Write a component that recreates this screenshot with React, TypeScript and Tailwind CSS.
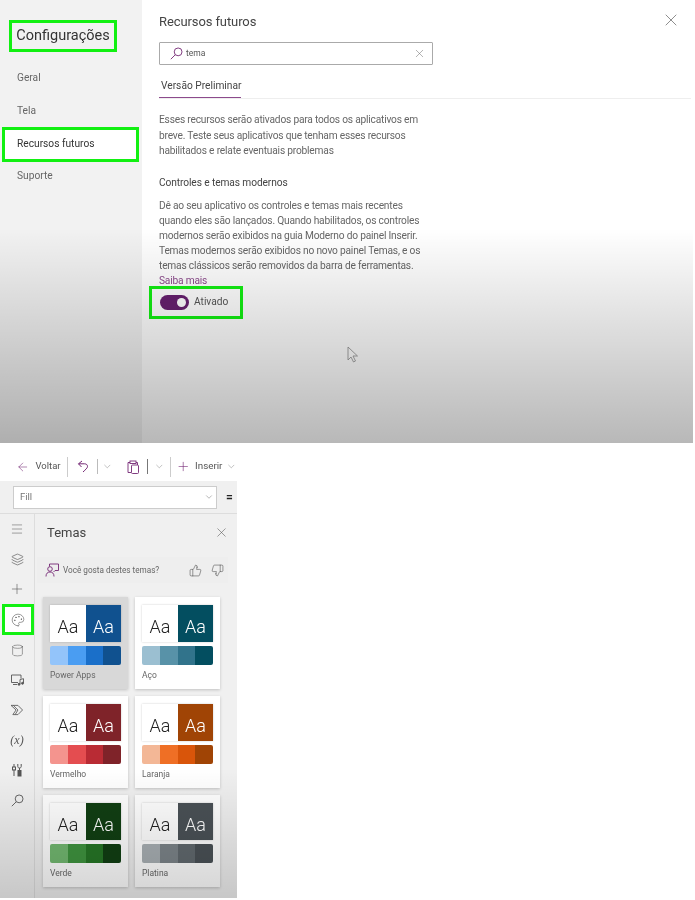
import { ArrowLeft, ChevronDown, Plus, ThumbsDown, ThumbsUp, X, Menu, Layers, Palette, Cylinder } from 'lucide-react'

const font = "font-['Roboto',sans-serif]"

const themes = [
  { name: 'Power Apps', dark: '#10518f', colors: ['#93c4fa', '#4a9df2', '#1a6fc9', '#10518f'], selected: true },
  { name: 'Aço', dark: '#034e60', colors: ['#9bbfd1', '#5892a8', '#31738b', '#034e60'] },
  { name: 'Vermelho', dark: '#7f2329', colors: ['#f4948e', '#e44d50', '#b92b34', '#7f2329'] },
  { name: 'Laranja', dark: '#a04405', colors: ['#f3b796', '#ef6f25', '#d9550a', '#a04405'] },
  { name: 'Verde', dark: '#113f13', colors: ['#72b870', '#3f943f', '#267626', '#113f13'] },
  { name: 'Platina', dark: '#4a5156', colors: ['#a8afb3', '#7c8489', '#61696e', '#4a5156'] },
]

function SearchIcon({ size, color }: { size: number; color: string }) {
  return (
    <svg width={size} height={size} viewBox="0 0 16 16" fill="none" stroke={color} strokeWidth="1.1">
      <circle cx="10" cy="6" r="4.8" />
      <path d="M6.500 9.500 1 15" />
    </svg>
  )
}

function MediaIcon() {
  return (
    <svg width="15" height="14" viewBox="0 0 15 14" fill="none" stroke="#555" strokeWidth="0.9">
      <path d="M8 9.500H1.500V2h9.500v3.500" />
      <path d="M3 11.500h4" />
      <path d="M10 11V6.500l3.500-.8V10" />
      <circle cx="9" cy="11.300" r="1" fill="#555" />
      <circle cx="12.500" cy="10.300" r="1" fill="#555" />
    </svg>
  )
}

function AutomateIcon() {
  return (
    <svg width="14" height="12" viewBox="0 0 15 13" fill="none" stroke="#555" strokeWidth="0.9">
      <path d="M1 1.500h7.500l5 5-5 5H3l3.500-5z" />
      <path d="M3.500 1.500l5 5-3 5" />
    </svg>
  )
}

function ToolsIcon() {
  return (
    <svg width="12" height="14" viewBox="0 0 12 14" fill="none" stroke="#555" strokeWidth="1">
      <path d="M3 1v3M3 6.500V13" />
      <rect x="1.500" y="4" width="3" height="3" />
      <path d="M8.500 5v8" />
      <path d="M6.800 1v2.500c0 1 .8 1.500 1.700 1.500s1.700-.5 1.700-1.500V1" />
      <rect x="7" y="7.500" width="3" height="5.500" fill="#555" />
    </svg>
  )
}

function FeedbackIcon() {
  return (
    <svg width="14" height="14" viewBox="0 0 14 14" fill="none" stroke="#742774" strokeWidth="0.9">
      <path d="M4.500 3.500V1h9v6.500h-3.500l-1.500 1.500" />
      <circle cx="5" cy="6" r="2.300" />
      <path d="M1 13.500c0-3 1.500-4.500 4-4.500s4 1.500 4 4.500" />
    </svg>
  )
}

function UndoIcon() {
  return (
    <svg width="12" height="13" viewBox="0 0 12 13" fill="none" stroke="#742774" strokeWidth="1">
      <path d="M5 1 1.500 3.800h6c2 0 3 1.200 3 2.600 0 1.700-1.800 3-4.500 5.600" />
      <path d="M1.500 3.800 4.500 7" />
    </svg>
  )
}

function PasteIcon() {
  return (
    <svg width="12" height="14" viewBox="0 0 12 14" fill="none" stroke="#742774" strokeWidth="0.9">
      <path d="M3 2.500H1v10h3" />
      <path d="M9 2.500h1.500V5" />
      <rect x="3" y="1" width="6" height="2.500" />
      <rect x="4.500" y="5" width="7" height="8.500" rx="1" />
    </svg>
  )
}

function ThemeCard({ t }: { t: (typeof themes)[number] }) {
  return (
    <div className={`h-[92px] w-[85px] px-[7px] pt-[8px] shadow-[0_1px_3px_rgba(0,0,0,0.2)] ${t.selected ? 'bg-[#d8d8d8]' : 'bg-white'}`}>
      <div className="flex h-[37px] w-[71px] shadow-[0_0_2px_rgba(0,0,0,0.2)]">
        <div className="flex w-[36px] items-end justify-center bg-white pb-[3px] text-[18px] font-light leading-[24px] text-[#222]">Aa</div>
        <div className="flex w-[35px] items-end justify-center pb-[3px] text-[18px] font-light leading-[24px] text-white" style={{ backgroundColor: t.dark }}>Aa</div>
      </div>
      <div className="mt-[4px] flex h-[19px] w-[71px] overflow-hidden rounded-[2px]">
        {t.colors.map((c) => (
          <div key={c} className="flex-1" style={{ backgroundColor: c }} />
        ))}
      </div>
      <div className="mt-[4px] text-[8.500px] leading-[12px] text-[#666]">{t.name}</div>
    </div>
  )
}

export default function App() {
  return (
    <div className={`${font} h-[900px] w-[695px] overflow-hidden bg-white blur-[0.35px]`}>
      {/* Settings dialog */}
      <div className="relative flex h-[443px] w-[693px] bg-white">
        <div className="w-[142px] shrink-0 bg-[#f2f2f2] pt-[20px]">
          <div className="ml-[9px] flex h-[32px] w-[108px] items-center justify-center border-[3px] border-[#12f012] text-[14.500px] text-[#333]">Configurações</div>
          <div className="ml-[17px] mt-[18px] text-[10.200px] leading-[16px] text-[#666]">Geral</div>
          <div className="ml-[17px] mt-[17px] text-[10.200px] leading-[16px] text-[#666]">Tela</div>
          <div className="ml-[2px] mt-[8px] flex h-[35px] w-[137px] items-center border-[3px] border-[#12f012] bg-white pb-[2px] pl-[12px] text-[10.200px] text-[#333]">Recursos futuros</div>
          <div className="ml-[17px] mt-[6px] text-[10.200px] leading-[16px] text-[#666]">Suporte</div>
        </div>
        <div className="flex-1 pl-[17px]">
          <div className="flex h-[42px] items-center justify-between pr-[12px]">
            <div className="pt-[1px] text-[13px] tracking-[-0.1px] text-[#444]">Recursos futuros</div>
            <X size={20} strokeWidth={0.8} className="-mt-[2px] text-[#555]" />
          </div>
          <div className="flex h-[23px] w-[274px] items-center rounded-[1px] border border-[#aaa] pl-[10px] pr-[6px]">
            <SearchIcon size={13} color="#742774" />
            <span className="ml-[3px] flex-1 text-[8.500px] text-[#555]">tema</span>
            <X size={13} strokeWidth={0.9} className="text-[#666]" />
          </div>
          <div className="mt-[12px] w-[532px] border-b border-[#eee]">
            <div className="w-[82px] border-b border-[#8c4a8c] pb-[2px] pl-[2px] text-[10.200px] leading-[18px] whitespace-nowrap text-[#444]">Versão Preliminar</div>
          </div>
          <p className="mt-[13px] w-[290px] text-[10.200px] leading-[15.500px] tracking-[-0.2px] text-[#666]">
            Esses recursos serão ativados para todos os aplicativos em<br />
            breve. Teste seus aplicativos que tenham esses recursos<br />
            habilitados e relate eventuais problemas
          </p>
          <div className="mt-[16px] text-[10.200px] leading-[16px] tracking-[-0.1px] text-[#444]">Controles e temas modernos</div>
          <p className="mt-[7px] w-[290px] text-[10.200px] leading-[15px] tracking-[-0.2px] whitespace-nowrap text-[#666]">
            Dê ao seu aplicativo os controles e temas mais recentes<br />
            quando eles são lançados. Quando habilitados, os controles<br />
            modernos serão exibidos na guia Moderno do painel Inserir.<br />
            Temas modernos serão exibidos no novo painel Temas, e os<br />
            temas clássicos serão removidos da barra de ferramentas.<br />
            <span className="text-[#8c4a8c]">Saiba mais</span>
          </p>
          <div className="-ml-[10px] -mt-[2px] flex h-[33px] w-[94px] items-center border-[3px] border-[#12f012] pl-[8px]">
            <div className="flex h-[15px] w-[29px] items-center justify-end rounded-full bg-[#67206f] pr-[3px]">
              <div className="h-[9px] w-[9px] rounded-full bg-white" />
            </div>
            <span className="ml-[5px] text-[10.200px] text-[#555]">Ativado</span>
          </div>
        </div>
        <div className="pointer-events-none absolute inset-x-0 bottom-0 h-[215px] bg-gradient-to-b from-transparent to-[rgba(0,0,0,0.28)]" />
        <svg className="absolute left-[347px] top-[346px]" width="12" height="18" viewBox="0 0 12 18" fill="none" stroke="#777" strokeWidth="0.8">
          <path d="M1 1v13l3-3 2.500 5 2-1-2.500-5h4.500z" />
        </svg>
      </div>

      {/* Studio panel */}
      <div className="relative mt-[9px] h-[446px] w-[237px] bg-[#f0f0f0]">
        <div className="flex h-[29px] items-center bg-white pl-[16px] text-[#742774]">
          <ArrowLeft size={14} strokeWidth={1} />
          <span className="ml-[6px] text-[9.500px] text-[#555]">Voltar</span>
          <div className="ml-[6px] h-[20px] w-px bg-[#ccc]" />
          <div className="ml-[9px]"><UndoIcon /></div>
          <div className="ml-[8px] h-[15px] w-px bg-[#bbb]" />
          <ChevronDown size={11} strokeWidth={1} className="ml-[5px] text-[#777]" />
          <div className="ml-[14px]"><PasteIcon /></div>
          <div className="ml-[8px] h-[15px] w-px bg-[#777]" />
          <ChevronDown size={11} strokeWidth={1} className="ml-[6px] text-[#777]" />
          <div className="ml-[5px] h-[20px] w-px bg-[#ccc]" />
          <Plus size={15} strokeWidth={1} className="ml-[5px]" />
          <span className="ml-[5px] text-[9.800px] text-[#555]">Inserir</span>
          <ChevronDown size={11} strokeWidth={1} className="ml-[4px] text-[#777]" />
        </div>
        <div className="flex h-[33px] items-center border-b border-[#ddd] pl-[13px]">
          <div className="flex h-[23px] w-[204px] items-center justify-between border border-[#ccc] bg-white pl-[6px] pr-[2px] text-[9.500px] text-[#777]">
            Fill
            <ChevronDown size={10} strokeWidth={1} className="text-[#555]" />
          </div>
          <span className="ml-[9px] text-[12px] font-bold text-[#222]">=</span>
        </div>
        <div className="flex h-[384px]">
          <div className="flex w-[35px] flex-col items-center border-r border-[#ddd] text-[#555]">
            <div className="flex h-[30px] items-center"><Menu size={14} strokeWidth={0.9} /></div>
            <div className="flex h-[30px] items-center"><Layers size={13} strokeWidth={1.2} /></div>
            <div className="flex h-[30px] items-center"><Plus size={16} strokeWidth={0.9} /></div>
            <div className="ml-[1px] flex h-[31px] w-[32px] items-center justify-center border-[3px] border-[#12f012] bg-white"><Palette size={14} strokeWidth={1} /></div>
            <div className="flex h-[30px] items-center"><Cylinder size={13} strokeWidth={1} /></div>
            <div className="flex h-[30px] items-center"><MediaIcon /></div>
            <div className="flex h-[30px] items-center"><AutomateIcon /></div>
            <div className="flex h-[30px] items-center font-['Liberation_Serif',serif] text-[12px] italic">(x)</div>
            <div className="flex h-[30px] items-center"><ToolsIcon /></div>
            <div className="flex h-[30px] items-center"><SearchIcon size={13} color="#555" /></div>
          </div>
          <div className="pl-[8px]">
            <div className="flex h-[37px] w-[186px] items-center justify-between pl-[4px]">
              <span className="text-[13px] text-[#444]">Temas</span>
              <X size={15} strokeWidth={0.9} className="text-[#555]" />
            </div>
            <div className="-ml-[6px] mt-[6px] flex h-[26px] w-[191px] items-center bg-[#eeeeee] pl-[8px] pr-[4px]">
              <FeedbackIcon />
              <span className="ml-[4px] flex-1 text-[8.200px] text-[#666]">Você gosta destes temas?</span>
              <ThumbsUp size={13} strokeWidth={1} className="text-[#444]" />
              <ThumbsDown size={13} strokeWidth={1} className="ml-[9px] text-[#444]" />
            </div>
            <div className="mt-[14px] grid w-[177px] grid-cols-2 gap-x-[7px] gap-y-[7px]">
              {themes.map((t) => (
                <ThemeCard key={t.name} t={t} />
              ))}
            </div>
          </div>
        </div>
        <div className="pointer-events-none absolute inset-x-0 bottom-0 h-[130px] bg-gradient-to-b from-transparent to-[rgba(0,0,0,0.17)]" />
      </div>
    </div>
  )
}
